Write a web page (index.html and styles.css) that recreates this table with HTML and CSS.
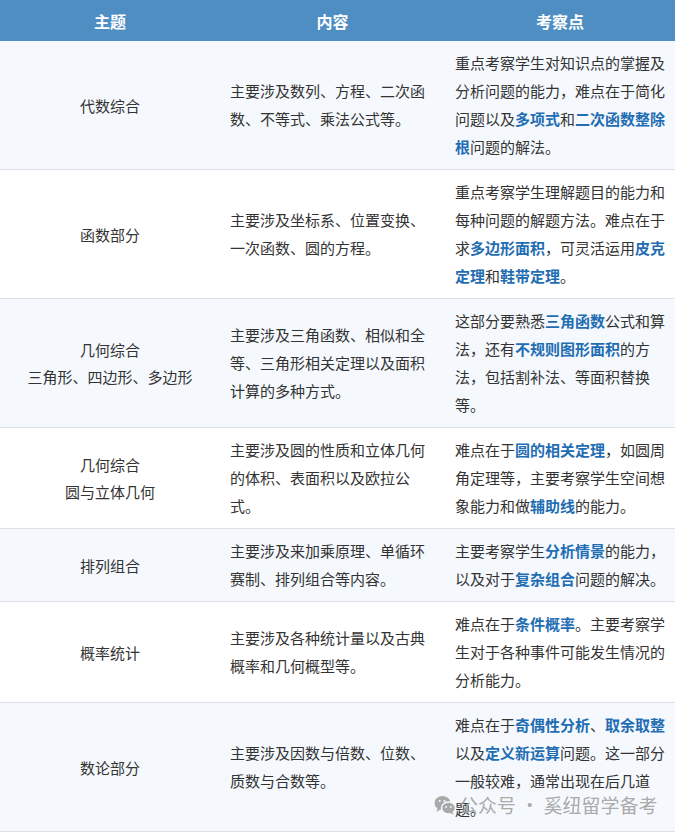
FILE: index.html
```html
<!DOCTYPE html>
<html lang="zh">
<head>
<meta charset="utf-8">
<link rel="stylesheet" href="styles.css">
</head>
<body>
<div class="wrap">
<table class="tbl">
  <colgroup><col class="c1"><col class="c2"><col class="c3"></colgroup>
  <thead>
    <tr><th>主题</th><th>内容</th><th>考察点</th></tr>
  </thead>
  <tbody>
    <tr class="alt">
      <td class="topic">代数综合</td>
      <td class="content">主要涉及数列、方程、二次函数、不等式、乘法公式等。</td>
      <td>重点考察学生对知识点的掌握及分析问题的能力，难点在于简化问题以及<b>多项式</b>和<b>二次函数整除根</b>问题的解法。</td>
    </tr>
    <tr>
      <td class="topic">函数部分</td>
      <td class="content">主要涉及坐标系、位置变换、一次函数、圆的方程。</td>
      <td>重点考察学生理解题目的能力和每种问题的解题方法。难点在于求<b>多边形面积</b>，可灵活运用<b>皮克定理</b>和<b>鞋带定理</b>。</td>
    </tr>
    <tr class="alt">
      <td class="topic">几何综合<br>三角形、四边形、多边形</td>
      <td class="content">主要涉及三角函数、相似和全等、三角形相关定理以及面积计算的多种方式。</td>
      <td>这部分要熟悉<b>三角函数</b>公式和算法，还有<b>不规则图形面积</b>的方法，包括割补法、等面积替换等。</td>
    </tr>
    <tr>
      <td class="topic">几何综合<br>圆与立体几何</td>
      <td class="content">主要涉及圆的性质和立体几何的体积、表面积以及欧拉公式。</td>
      <td>难点在于<b>圆的相关定理</b>，如圆周角定理等，主要考察学生空间想象能力和做<b>辅助线</b>的能力。</td>
    </tr>
    <tr class="alt">
      <td class="topic">排列组合</td>
      <td class="content">主要涉及来加乘原理、单循环赛制、排列组合等内容。</td>
      <td>主要考察学生<b>分析情景</b>的能力，以及对于<b>复杂组合</b>问题的解决。</td>
    </tr>
    <tr>
      <td class="topic">概率统计</td>
      <td class="content">主要涉及各种统计量以及古典概率和几何概型等。</td>
      <td>难点在于<b>条件概率</b>。主要考察学生对于各种事件可能发生情况的分析能力。</td>
    </tr>
    <tr class="alt">
      <td class="topic">数论部分</td>
      <td class="content">主要涉及因数与倍数、位数、质数与合数等。</td>
      <td>难点在于<b>奇偶性分析</b>、<b>取余取整</b>以及<b>定义新运算</b>问题。这一部分一般较难，通常出现在后几道题。</td>
    </tr>
  </tbody>
</table>
<div class="mark">
  <svg class="wx" width="22" height="20" viewBox="0 0 22 20">
    <ellipse cx="8.5" cy="8" rx="8" ry="7" fill="#a9a9a9"/>
    <path d="M3.5 13 L2.5 17 L7 14 Z" fill="#a9a9a9"/>
    <ellipse cx="14.5" cy="13" rx="7" ry="6" fill="#a9a9a9" stroke="#f5f9fd" stroke-width="1.5"/>
    <path d="M18.5 17 L19.5 19.8 L16 18 Z" fill="#a9a9a9"/>
    <circle cx="5.7" cy="6" r="1.1" fill="#f5f9fd"/>
    <circle cx="10.5" cy="6" r="1.1" fill="#f5f9fd"/>
    <circle cx="12.2" cy="12" r="0.9" fill="#f5f9fd"/>
    <circle cx="16.8" cy="12" r="0.9" fill="#f5f9fd"/>
  </svg>
  <span>公众号 · 奚纽留学备考</span>
</div>
</div>
</body>
</html>
```

FILE: styles.css
```css
html, body {
  margin: 0;
  padding: 0;
  background: #ffffff;
}
.wrap {
  position: relative;
  width: 675px;
}
.tbl {
  width: 675px;
  border-collapse: collapse;
  table-layout: fixed;
  font-family: "Noto Sans CJK SC", "Noto Sans", sans-serif;
  font-size: 15px;
  color: #333333;
}
.c1 { width: 220px; }
.c2 { width: 225px; }
.c3 { width: 230px; }
.tbl th {
  height: 41px;
  padding: 0;
  background: #4e8ec3;
  color: #ffffff;
  font-size: 16px;
  font-weight: 700;
  text-align: center;
  vertical-align: middle;
}
.tbl td {
  padding: 8px 0 8px 10px;
  line-height: 28px;
  vertical-align: middle;
  text-align: left;
  border-bottom: 1px solid #dde1e5;
}
.tbl td.content {
  padding-right: 16px;
}
.tbl td.topic {
  padding: 8px 0;
  text-align: center;
  line-height: 27px;
}
.tbl tr.alt td {
  background: #f5f9fd;
}
.tbl b {
  color: #1f6db3;
  font-weight: 700;
}
.mark {
  position: absolute;
  left: 434px;
  top: 793px;
  display: flex;
  align-items: center;
  gap: 3px;
  color: rgba(160, 160, 160, 0.9);
  font-family: "Noto Sans CJK SC", sans-serif;
  font-size: 19px;
  line-height: 24px;
}
.wx { display: block; }
```
